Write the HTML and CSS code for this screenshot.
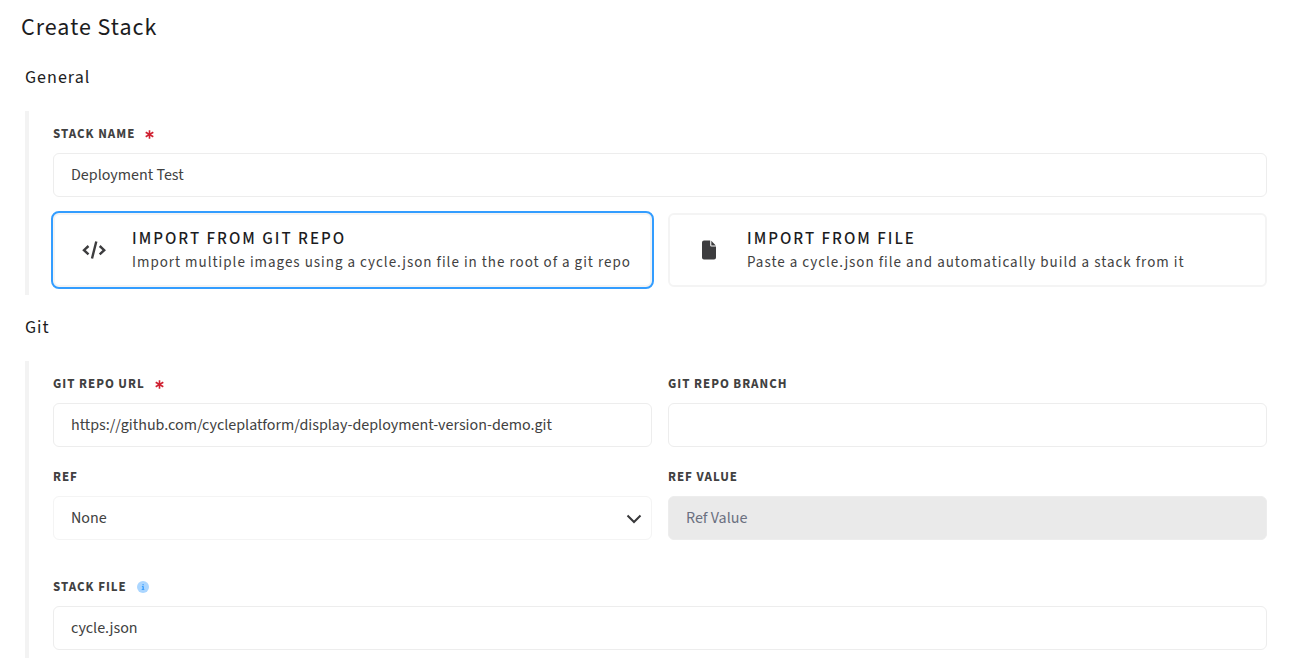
FILE: index.html
```
<!DOCTYPE html>
<html lang="en">
<head>
<meta charset="utf-8">
<meta name="viewport" content="width=device-width, initial-scale=1">
<title>Create Stack</title>
<link rel="stylesheet" href="styles.css">
</head>
<body>
<form class="page">
  <h1 class="page-title">Create Stack</h1>

  <section class="section">
    <h2 class="section-title">General</h2>
    <div class="section-body">
      <div class="field">
        <div class="label-row">
          <label class="label" for="stack-name">Stack Name</label>
          <svg class="required" viewBox="0 0 9 9" aria-hidden="true"><path d="M4.5 .2V8.800M.7 2.300L8.300 6.700M8.300 2.300L.7 6.700"/></svg>
        </div>
        <input class="control" id="stack-name" type="text" value="Deployment Test" required>
      </div>
      <div class="columns options">
        <button class="option option-selected" type="button" aria-pressed="true">
          <svg class="option-icon" viewBox="0 0 24 20" aria-hidden="true"><path class="stroke" d="M6.500 6L2 10.200L6.500 14.400M17.700 6L22.200 10.200L17.700 14.400M14.300 1.500L10 18.500"/></svg>
          <span class="option-text">
            <span class="option-title">Import from Git Repo</span>
            <span class="option-note">Import multiple images using a cycle.json file in the root of a git repo</span>
          </span>
        </button>
        <button class="option" type="button" aria-pressed="false">
          <svg class="option-icon" viewBox="0 0 24 20" aria-hidden="true"><path d="M7 .5H13.200V5.200Q13.200 6.500 14.500 6.500H19V17.500Q19 19.500 17 19.500H7Q5 19.500 5 17.500V2.500Q5 .5 7 .5ZM14.300 .7L18.800 5.400H14.300Z"/></svg>
          <span class="option-text">
            <span class="option-title">Import from File</span>
            <span class="option-note">Paste a cycle.json file and automatically build a stack from it</span>
          </span>
        </button>
      </div>
    </div>
  </section>

  <section class="section">
    <h2 class="section-title">Git</h2>
    <div class="section-body">
      <div class="columns">
        <div class="field">
          <div class="label-row">
            <label class="label" for="repo-url">Git Repo URL</label>
            <svg class="required" viewBox="0 0 9 9" aria-hidden="true"><path d="M4.5 .2V8.800M.7 2.300L8.300 6.700M8.300 2.300L.7 6.700"/></svg>
          </div>
          <input class="control" id="repo-url" type="text" value="https://github.com/cycleplatform/display-deployment-version-demo.git" required>
        </div>
        <div class="field">
          <div class="label-row"><label class="label" for="repo-branch">Git Repo Branch</label></div>
          <input class="control" id="repo-branch" type="text">
        </div>
        <div class="field">
          <div class="label-row"><label class="label" for="ref">Ref</label></div>
          <div class="select-wrap">
            <select class="control select" id="ref"><option>None</option></select>
            <svg class="chevron" viewBox="0 0 16 10" aria-hidden="true"><path d="M1.500 1.500L8 8L14.500 1.500"/></svg>
          </div>
        </div>
        <div class="field">
          <div class="label-row"><label class="label" for="ref-value">Ref Value</label></div>
          <input class="control" id="ref-value" type="text" placeholder="Ref Value" disabled>
        </div>
      </div>
      <div class="field stack-file">
        <div class="label-row">
          <label class="label" for="stack-file">Stack File</label>
          <svg class="info" viewBox="0 0 12 12" aria-hidden="true"><circle cx="6" cy="6" r="6"/><path d="M5.500 3.300H6.700V4.300H5.500ZM4.900 5.200H6.700V8H7.300V8.700H4.700V8H5.600V5.900H4.900Z"/></svg>
        </div>
        <input class="control" id="stack-file" type="text" value="cycle.json">
      </div>
    </div>
  </section>
</form>
</body>
</html>
```
FILE: styles.css
```
* {
  box-sizing: border-box;
}

body {
  margin: 0;
  background: #fff;
  color: #414141;
  font-family: "Source Sans 3", "Source Sans Pro", "Noto Sans CJK SC", sans-serif;
  font-size: 16px;
}

.page {
  padding: 10px 22px 12px 21px;
}

.page-title {
  margin: 0;
  color: #1c1c1e;
  font-size: 24px;
  font-weight: 400;
  line-height: 35px;
  letter-spacing: 1px;
}

.section {
  padding-left: 4px;
}

.section-title {
  margin: 0;
  padding: 20px 0;
  color: #1c1c1e;
  font-size: 18px;
  font-weight: 400;
  line-height: 26px;
  letter-spacing: 1px;
}

.section-body {
  padding: 12px 0 8px 24px;
  border-left: 4px solid #f3f3f3;
}

.columns {
  display: grid;
  grid-template-columns: repeat(2, minmax(0, 1fr));
  gap: 19px 16px;
}

.options {
  margin-top: 16px;
}

.label-row {
  display: flex;
  align-items: center;
  gap: 10px;
  height: 22px;
  margin-bottom: 8px;
}

.label {
  font-size: 13px;
  font-weight: 700;
  line-height: 22px;
  letter-spacing: 1px;
  text-transform: uppercase;
}

.required {
  width: 9px;
  height: 9px;
  fill: none;
  stroke: #cf2030;
  stroke-width: 1.6;
}

.info {
  width: 12px;
  height: 12px;
  fill: #1c90ff;
}

.info circle {
  fill: #abd6ff;
}

.control {
  display: block;
  width: 100%;
  height: 44px;
  padding: 0 17px;
  border: 1px solid #ededed;
  border-radius: 6px;
  background: #fff;
  color: #414141;
  font: inherit;
}

.control:disabled {
  background: #eaeaea;
}

.control::placeholder {
  color: #6b7080;
}

.select-wrap {
  position: relative;
}

.select {
  appearance: none;
  border-color: #f4f4f4;
}

.chevron {
  position: absolute;
  top: 18px;
  right: 10px;
  width: 16px;
  height: 10px;
  fill: none;
  stroke: #38383a;
  stroke-width: 2;
  pointer-events: none;
}

.option {
  display: flex;
  align-items: center;
  gap: 26px;
  min-height: 74px;
  padding: 8px 12px 8px 27px;
  border: 2px solid #f4f4f4;
  border-radius: 6px;
  background: #fff;
  color: #414141;
  font: inherit;
  text-align: left;
}

.option-selected {
  outline: 2px solid #339dff;
}

.option-icon {
  flex: none;
  width: 24px;
  height: 20px;
  fill: #3d3d3f;
}

.option-icon .stroke {
  fill: none;
  stroke: #3d3d3f;
  stroke-width: 2.4;
}

.option-text {
  display: flex;
  flex-direction: column;
}

.option-title {
  color: #1c1c1e;
  font-size: 17px;
  font-weight: 500;
  line-height: 26px;
  letter-spacing: 2px;
  text-transform: uppercase;
}

.option-note {
  font-size: 15px;
  line-height: 22px;
  letter-spacing: 1px;
}

.stack-file {
  margin-top: 36px;
}
```
